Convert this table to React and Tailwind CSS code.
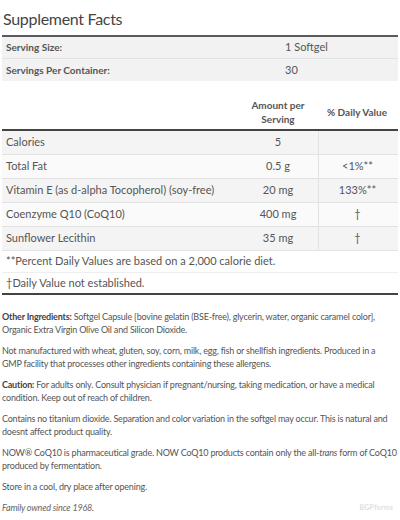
const SERVING = [
  { label: "Serving Size:", value: "1 Softgel" },
  { label: "Servings Per Container:", value: "30" },
];

const NUTRIENTS = [
  { name: "Calories", amount: "5", dv: "" },
  { name: "Total Fat", amount: "0.5 g", dv: "<1%**" },
  { name: "Vitamin E (as d-alpha Tocopherol) (soy-free)", amount: "20 mg", dv: "133%**" },
  { name: "Coenzyme Q10 (CoQ10)", amount: "400 mg", dv: "†" },
  { name: "Sunflower Lecithin", amount: "35 mg", dv: "†" },
];

function Para({ children }) {
  return <p className="mb-[8px] leading-[13px]">{children}</p>;
}

function Line({ children }) {
  return <span className="block whitespace-nowrap">{children}</span>;
}

export default function App() {
  return (
    <div
      className="w-[400px] h-[520px] overflow-hidden bg-white px-[2px] pt-[9px] text-[#555]"
      style={{ fontFamily: "Lato, 'Open Sans', sans-serif" }}
    >
      <h2 className="pl-[1px] text-[16px] leading-[20px] tracking-[-0.3px] text-[#444]">Supplement Facts</h2>

      <div className="mt-[6px] border-t-2 border-[#5a5a5a]">
        {SERVING.map((row) => (
          <div
            key={row.label}
            className="grid h-[22px] grid-cols-[283px_1fr] items-center border-b border-[#e2e2e2] bg-[#f2f2f2] text-[11px] last:border-b-0"
          >
            <div className="pl-[4px] text-[10px] font-bold">{row.label}</div>
            <div>{row.value}</div>
          </div>
        ))}
      </div>

      <div className="mt-[17px] grid grid-cols-[236px_80px_78px] items-center pb-[3px] text-[10px] font-bold">
        <div />
        <div className="text-center leading-[14px]">
          Amount per
          <br />
          Serving
        </div>
        <div className="text-center">% Daily Value</div>
      </div>

      <div className="border-t-2 border-[#444]">
        {NUTRIENTS.map((row, i) => (
          <div
            key={row.name}
            className={`grid h-[24px] grid-cols-[236px_80px_78px] items-center border-b border-[#e2e2e2] text-[11px] ${
              i % 2 === 0 ? "bg-[#f4f4f4]" : "bg-[#fafafa]"
            }`}
          >
            <div className="pl-[4px]">{row.name}</div>
            <div className="text-center">{row.amount}</div>
            <div className="flex h-full items-center justify-center border-l border-[#e2e2e2]">{row.dv}</div>
          </div>
        ))}
        <div className="flex h-[22px] items-center border-b border-[#eee] pl-[4px] text-[11px]">
          **Percent Daily Values are based on a 2,000 calorie diet.
        </div>
        <div className="flex h-[20px] items-center pl-[4px] text-[11px]">†Daily Value not established.</div>
      </div>

      <div className="border-t-2 border-[#444] pt-[15px] text-[9px] tracking-[-0.2px]">
        <Para>
          <Line>
            <b className="text-[#444]">Other Ingredients:</b> Softgel Capsule [bovine gelatin (BSE-free), glycerin,
            water, organic caramel color],
          </Line>
          <Line>Organic Extra Virgin Olive Oil and Silicon Dioxide.</Line>
        </Para>
        <Para>
          <Line>
            Not manufactured with wheat, gluten, soy, corn, milk, egg, fish or shellfish ingredients. Produced in a
          </Line>
          <Line>GMP facility that processes other ingredients containing these allergens.</Line>
        </Para>
        <Para>
          <Line>
            <b className="text-[#444]">Caution:</b> For adults only. Consult physician if pregnant/nursing, taking
            medication, or have a medical
          </Line>
          <Line>condition. Keep out of reach of children.</Line>
        </Para>
        <Para>
          <Line>
            Contains no titanium dioxide. Separation and color variation in the softgel may occur. This is natural and
          </Line>
          <Line>doesnt affect product quality.</Line>
        </Para>
        <Para>
          <Line>
            NOW® CoQ10 is pharmaceutical grade. NOW CoQ10 products contain only the all-<i>trans</i> form of CoQ10
          </Line>
          <Line>produced by fermentation.</Line>
        </Para>
        <Para>
          <Line>Store in a cool, dry place after opening.</Line>
        </Para>
        <div className="flex items-center justify-between leading-[13px]">
          <i className="text-[#666]">Family owned since 1968.</i>
          <span className="pr-[5px] text-[7px] font-bold tracking-wide text-[#e0e0e0]">BGPforms</span>
        </div>
      </div>
    </div>
  );
}
